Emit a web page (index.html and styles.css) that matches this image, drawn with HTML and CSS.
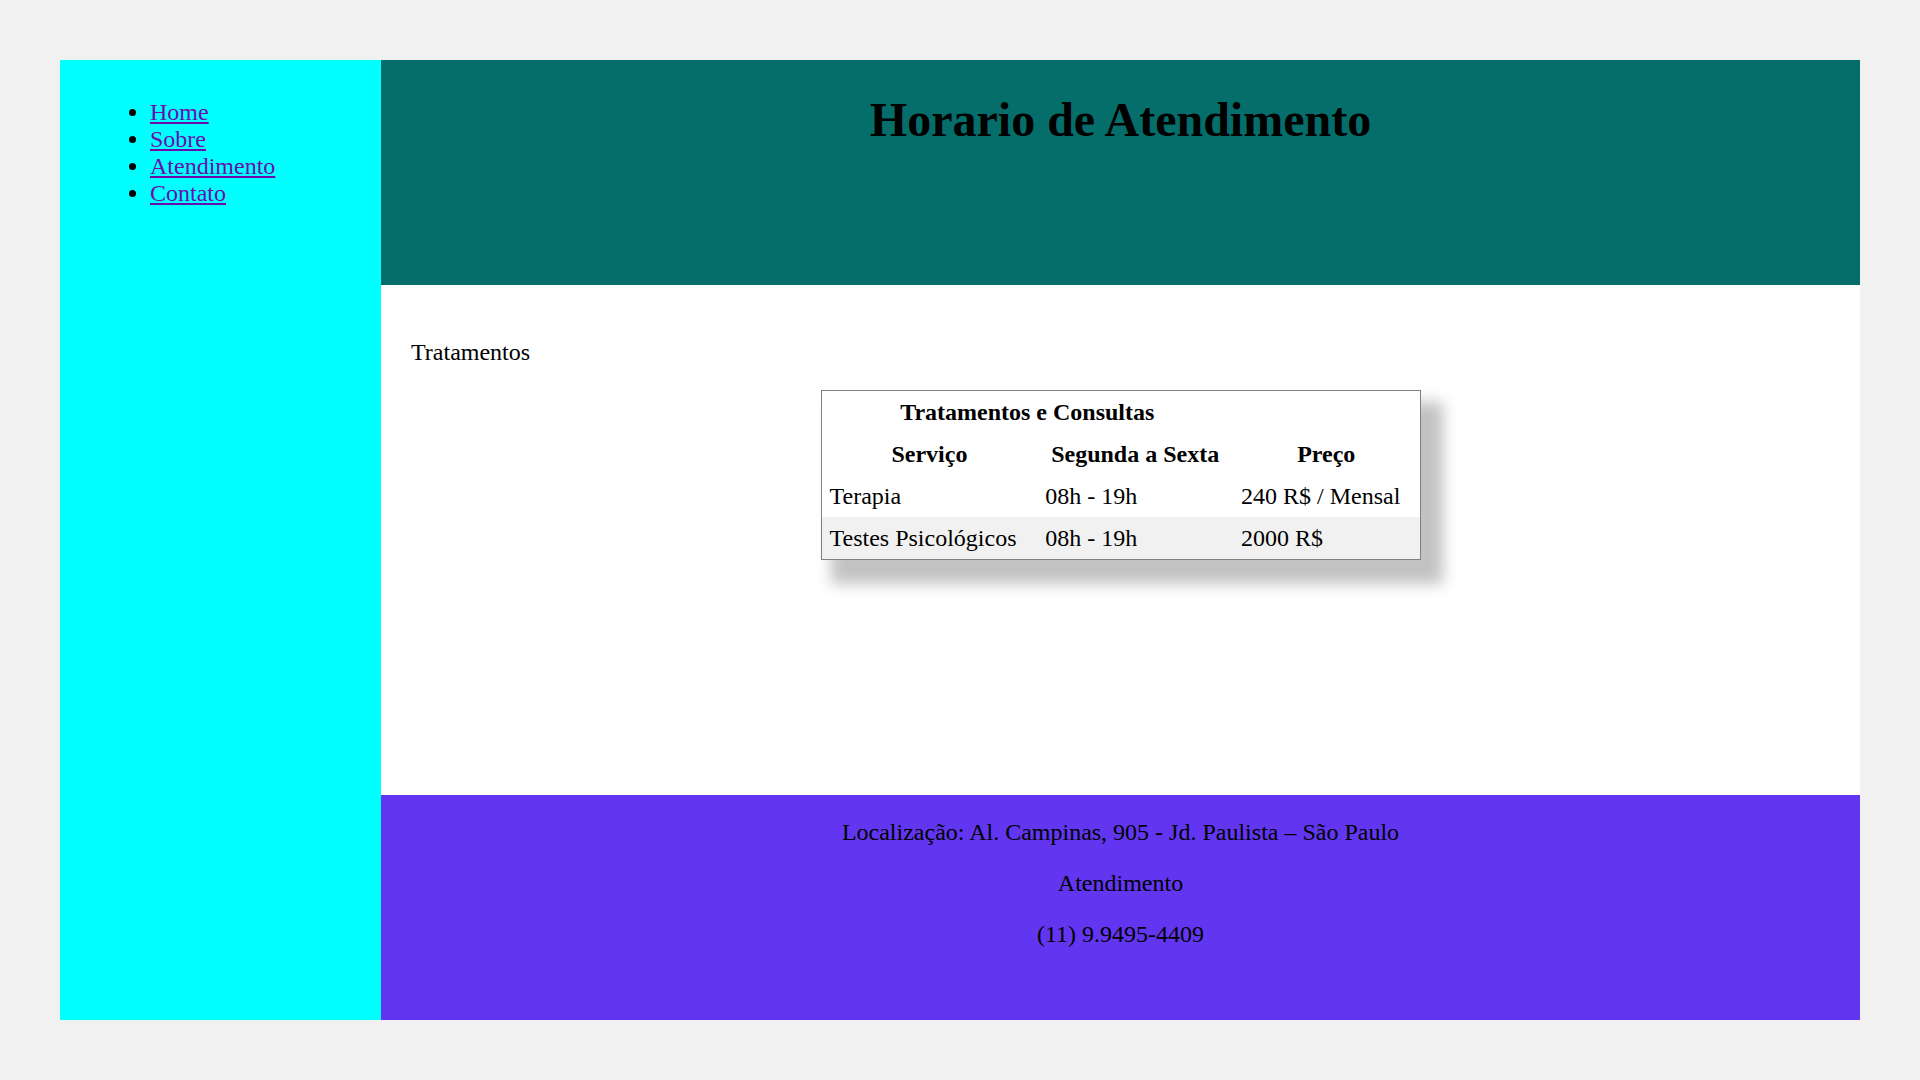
FILE: index.html
```html
<!DOCTYPE html>
<html lang="pt-BR">
<head>
<meta charset="utf-8">
<title>Horario de Atendimento</title>
<link rel="stylesheet" href="styles.css">
</head>
<body>
<div class="page">
  <aside class="sidebar">
    <ul class="nav">
      <li><a href="#">Home</a></li>
      <li><a href="#">Sobre</a></li>
      <li><a href="#">Atendimento</a></li>
      <li><a href="#">Contato</a></li>
    </ul>
  </aside>
  <header class="header">
    <h1 class="title">Horario de Atendimento</h1>
  </header>
  <main class="main">
    <p class="lead">Tratamentos</p>
    <table class="schedule">
      <tr><th colspan="2">Tratamentos e Consultas</th></tr>
      <tr><th>Serviço</th><th>Segunda a Sexta</th><th>Preço</th></tr>
      <tr><td>Terapia</td><td>08h - 19h</td><td>240 R$ / Mensal</td></tr>
      <tr class="alt"><td>Testes Psicológicos</td><td>08h - 19h</td><td>2000 R$</td></tr>
    </table>
  </main>
  <footer class="footer">
    <p>Localização: Al. Campinas, 905 - Jd. Paulista – São Paulo</p>
    <p>Atendimento</p>
    <p>(11) 9.9495-4409</p>
  </footer>
</div>
</body>
</html>
```
FILE: styles.css
```css
html, body {
  margin: 0;
  padding: 0;
}
body {
  background: #f1f1f1;
  font-family: "Liberation Serif", "Times New Roman", serif;
  font-size: 24px;
  color: #000;
}
.page {
  margin: 60px;
  height: 960px;
  display: grid;
  grid-template-columns: 321px 1fr;
  grid-template-rows: 225px 1fr 225px;
  grid-template-areas:
    "side head"
    "side main"
    "side foot";
}
.sidebar {
  grid-area: side;
  background: #00ffff;
  padding: 15px 0 0 50px;
}
.nav {
  margin: 24px 0;
  padding-left: 40px;
}
.nav a {
  color: #6a0dad;
}
.header {
  grid-area: head;
  background: #056e6b;
  text-align: center;
}
.title {
  font-size: 48px;
  margin: 32px 0;
}
.main {
  grid-area: main;
  background: #ffffff;
  padding: 30px;
}
.lead {
  margin: 24px 0;
}
.schedule {
  width: 600px;
  margin: 0 auto;
  border: 1px solid #808080;
  border-collapse: collapse;
  box-shadow: 16px 18px 14px 6px #c2c2c2;
  background: #fff;
}
.schedule th,
.schedule td {
  padding: 8px 8px 7px;
}
.schedule td {
  text-align: left;
}
.schedule .alt {
  background: #f1f1f1;
}
.footer {
  grid-area: foot;
  background: #6236f0;
  text-align: center;
}
.footer p {
  margin: 24px 0;
}
```
